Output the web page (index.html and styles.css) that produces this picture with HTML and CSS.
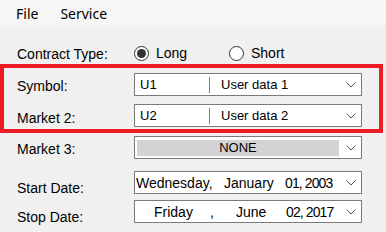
FILE: index.html
```html
<!DOCTYPE html>
<html lang="en">
<head>
  <meta charset="UTF-8">
  <title>Contract Settings</title>
  <link rel="stylesheet" href="styles.css">
</head>
<body>
  <nav class="menubar">
    <span class="menu-item">File</span>
    <span class="menu-item">Service</span>
  </nav>

  <div class="form">
    <div class="row row-contract">
      <span class="label">Contract Type:</span>
      <label class="radio radio-long"><span class="dot checked"></span>Long</label>
      <label class="radio"><span class="dot"></span>Short</label>
    </div>

    <!-- Highlighted symbols -->
    <div class="highlight">
      <div class="row row-symbol">
        <span class="label">Symbol:</span>
        <div class="combo">
          <span class="combo-code">U1</span>
          <span class="combo-sep"></span>
          <span class="combo-text">User data 1</span>
          <svg class="chev" width="10" height="6" viewBox="0 0 10 6"><polyline points="0.5,0.5 5,5 9.5,0.5" fill="none" stroke="#555" stroke-width="1"/></svg>
        </div>
      </div>
      <div class="row row-market2">
        <span class="label">Market 2:</span>
        <div class="combo">
          <span class="combo-code">U2</span>
          <span class="combo-sep"></span>
          <span class="combo-text">User data 2</span>
          <svg class="chev" width="10" height="6" viewBox="0 0 10 6"><polyline points="0.5,0.5 5,5 9.5,0.5" fill="none" stroke="#555" stroke-width="1"/></svg>
        </div>
      </div>
    </div>

    <div class="row row-market3">
      <span class="label">Market 3:</span>
      <div class="combo">
        <span class="combo-fill">NONE</span>
        <svg class="chev" width="10" height="6" viewBox="0 0 10 6"><polyline points="0.5,0.5 5,5 9.5,0.5" fill="none" stroke="#555" stroke-width="1"/></svg>
      </div>
    </div>

    <div class="row row-start">
      <span class="label label-date">Start Date:</span>
      <div class="combo date">
        <span class="d-day">Wednesday,</span>
        <span class="d-month">January</span>
        <span class="d-num">01, 2003</span>
        <svg class="chev" width="10" height="6" viewBox="0 0 10 6"><polyline points="0.5,0.5 5,5 9.5,0.5" fill="none" stroke="#555" stroke-width="1"/></svg>
      </div>
    </div>

    <div class="row row-stop">
      <span class="label label-date">Stop Date:</span>
      <div class="combo date">
        <span class="d-day d-center">Friday</span>
        <span class="d-comma">,</span>
        <span class="d-month d-june">June</span>
        <span class="d-num">02, 2017</span>
        <svg class="chev" width="10" height="6" viewBox="0 0 10 6"><polyline points="0.5,0.5 5,5 9.5,0.5" fill="none" stroke="#555" stroke-width="1"/></svg>
      </div>
    </div>
  </div>
</body>
</html>
```

FILE: styles.css
```css
body {
  margin: 0;
  padding: 0;
  width: 386px;
  height: 232px;
  overflow: hidden;
  background-color: #f0f0f0;
  font-family: "Liberation Sans", Arial, sans-serif;
  font-size: 14px;
  color: #000;
}

.menubar {
  height: 25px;
  background-color: #f6f6f6;
  display: flex;
  align-items: center;
  padding-left: 16px;
  gap: 22px;
  font-family: "Noto Sans", sans-serif;
  font-size: 14px;
}

.menu-item {
  line-height: 20px;
  margin-top: 2px;
}

.form {
  padding-top: 18px;
}

.row {
  display: flex;
  align-items: center;
  height: 23px;
}

.label {
  width: 117px;
  padding-left: 17px;
}

.row-contract {
  height: 20px;
}

.row-contract .label {
  padding-top: 2px;
}

.radio {
  display: flex;
  align-items: center;
  gap: 7px;
}

.radio-long {
  width: 95px;
}

.dot {
  width: 13px;
  height: 13px;
  border: 1px solid #333;
  border-radius: 50%;
  background-color: #fff;
  display: flex;
  align-items: center;
  justify-content: center;
}

.dot.checked::after {
  content: "";
  width: 9px;
  height: 9px;
  border-radius: 50%;
  background-color: #333;
}

.highlight {
  margin-top: 1px;
  width: 375px;
  border: 4px solid #ed1c24;
  padding: 5px 0 2px 0;
  display: flex;
  flex-direction: column;
  gap: 8px;
}

.highlight .label {
  width: 117px;
  padding-left: 13px;
}

.row-symbol .label {
  padding-top: 3px;
}

.row-market2 .label {
  padding-top: 4px;
}

.combo {
  width: 226px;
  height: 21px;
  border: 1px solid #7a7a7a;
  background-color: #fff;
  display: flex;
  align-items: center;
  position: relative;
  font-size: 13px;
}

.combo-code {
  width: 69px;
  padding-left: 5px;
}

.combo-sep {
  width: 1px;
  height: 16px;
  background-color: #808080;
}

.combo-text {
  padding-left: 11px;
}

.chev {
  position: absolute;
  right: 5px;
  top: 8px;
}

.row-market3 {
  margin-top: 3px;
}

.row-market3 .label {
  padding-top: 2px;
}

.combo-fill {
  margin-left: 2px;
  width: 202px;
  height: 16px;
  background-color: #d3d3d3;
  display: flex;
  align-items: center;
  justify-content: center;
}

.row-start {
  margin-top: 12px;
}

.row-stop {
  margin-top: 6px;
}

.label-date {
  padding-top: 11px;
}

.date {
  font-size: 14px;
}

.d-day {
  padding-left: 1px;
  width: 88px;
}

.d-center {
  padding-left: 19px;
  width: 56px;
}

.d-comma {
  width: 26px;
}

.d-month {
  width: 61px;
}

.d-june {
  width: 50px;
}

.d-num {
  letter-spacing: -0.9px;
}
```
